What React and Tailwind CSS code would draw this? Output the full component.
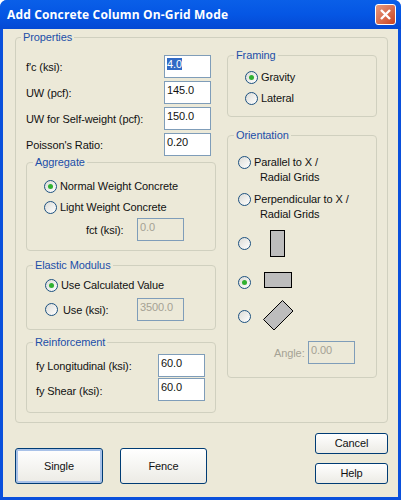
import React from 'react';

const Group = ({ title, className, titleClass, children }) => (
  <div className={`relative border border-[#d0d0bf] rounded-[4px] ${className}`}>
    <span className={`absolute -top-[9px] bg-[#ece9d8] px-[2px] text-[#1c4fa8] leading-[16px] ${titleClass || 'left-[6px]'}`}>{title}</span>
    {children}
  </div>
);

const Radio = ({ checked }) => (
  <span className="w-[13px] h-[13px] shrink-0 rounded-full border border-[#1c5180] bg-gradient-to-br from-[#dcdcd7] to-white flex items-center justify-center">
    {checked && <span className="w-[5px] h-[5px] rounded-full bg-[#31b131]" />}
  </span>
);

const Field = ({ value, disabled, selected, className }) => (
  <div className={`h-[23px] w-[47px] shrink-0 border border-[#7f9db9] pl-[2px] pt-[1px] leading-[15px] ${disabled ? 'bg-[#ece9d8] text-[#a5a294]' : 'bg-white'} ${className || ''}`}>
    {selected ? <span className="bg-[#316ac5] text-white">{value}</span> : value}
  </div>
);

const Button = ({ label, className }) => (
  <button className={`flex items-center justify-center rounded-[3px] border border-[#003c74] bg-gradient-to-b from-white to-[#ecebe5] ${className}`}>
    {label}
  </button>
);

const Row = ({ label, value }) => (
  <div className="flex items-center justify-between h-[26px] w-[185px]">
    <span className="pt-[3px]">{label}</span>
    <Field value={value} selected={value === '4.0'} />
  </div>
);

const RadioRow = ({ checked, label, className }) => (
  <div className={`flex items-center gap-[3px] h-[21px] ${className || ''}`}>
    <Radio checked={checked} />
    <span>{label}</span>
  </div>
);

export default function App() {
  return (
    <div className="w-[401px] h-[500px] flex flex-col bg-[#0a50dc] rounded-t-[7px] overflow-hidden text-[11px] tracking-[-0.1px] text-[#111]" style={{ fontFamily: '"Liberation Sans", Arial, sans-serif' }}>
      {/* Title bar */}
      <div className="h-[29px] shrink-0 flex items-center justify-between pl-[7px] pr-[5px] bg-gradient-to-b from-[#0a5fe8] via-[#0556e4] to-[#0449d4]">
        <span className="text-white font-bold text-[12px] tracking-[0.15px]" style={{ fontFamily: '"Open Sans", sans-serif' }}>Add Concrete Column On-Grid Mode</span>
        <div className="w-[21px] h-[21px] rounded-[3px] border border-white bg-gradient-to-br from-[#e79a7e] to-[#c9401c] flex items-center justify-center">
          <svg width="13" height="13" viewBox="0 0 13 13">
            <path d="M2 2 L11 11 M11 2 L2 11" stroke="#fff" strokeWidth="2.4" />
          </svg>
        </div>
      </div>

      {/* Dialog body */}
      <div className="flex-1 mx-[3px] mb-[3px] bg-[#ece9d8] pt-[8px] pl-[12px]">
        <Group title="Properties" className="w-[373px] h-[386px] flex pl-[10px]" titleClass="left-[5px]">
          <div className="w-[190px] pt-[15px]">
            <Row label="f'c (ksi):" value="4.0" />
            <Row label="UW (pcf):" value="145.0" />
            <Row label="UW for Self-weight (pcf):" value="150.0" />
            <Row label="Poisson's Ratio:" value="0.20" />

            <Group title="Aggregate" className="w-[190px] h-[89px] mt-[5px] pt-[13px] pl-[17px]">
              <RadioRow checked label="Normal Weight Concrete" />
              <RadioRow label="Light Weight Concrete" />
              <div className="flex items-center h-[23px] pl-[42px]">
                <span className="pt-[2px] w-[51px]">fct (ksi):</span>
                <Field value="0.0" disabled />
              </div>
            </Group>

            <Group title="Elastic Modulus" className="w-[190px] h-[65px] mt-[14px] pt-[9px] pl-[18px]">
              <RadioRow checked label="Use Calculated Value" />
              <div className="flex items-center h-[23px] mt-[2px]">
                <Radio />
                <span className="ml-[5px] w-[74px] pt-[2px]">Use (ksi):</span>
                <Field value="3500.0" disabled />
              </div>
            </Group>

            <Group title="Reinforcement" className="w-[190px] h-[71px] mt-[12px] pt-[9px] pl-[9px]">
              <div className="flex items-center justify-between w-[169px] h-[26px]">
                <span className="pt-[3px]">fy Longitudinal (ksi):</span>
                <Field value="60.0" />
              </div>
              <div className="flex items-center justify-between w-[169px] h-[23px]">
                <span className="pt-[3px]">fy Shear (ksi):</span>
                <Field value="60.0" />
              </div>
            </Group>
          </div>

          <div className="ml-[11px] w-[150px] pt-[17px]">
            <Group title="Framing" className="h-[62px] pt-[11px] pl-[17px]">
              <RadioRow checked label="Gravity" />
              <RadioRow label="Lateral" />
            </Group>

            <Group title="Orientation" className="h-[243px] mt-[18px] pl-[10px] pt-[16px]">
              <RadioRow label="Parallel to X /" />
              <div className="pl-[22px] leading-[14px] -mt-[3px]">Radial Grids</div>
              <RadioRow label="Perpendicular to X /" className="mt-[5px]" />
              <div className="pl-[22px] leading-[14px] -mt-[3px]">Radial Grids</div>

              <div className="flex items-center h-[28px] mt-[8px]">
                <Radio />
                <div className="ml-[19px] w-[15px] h-[27px] bg-[#bdbdbd] border border-black" />
              </div>
              <div className="flex items-center h-[28px] mt-[11px]">
                <Radio checked />
                <div className="ml-[13px] w-[28px] h-[16px] -mt-[4px] bg-[#bdbdbd] border border-black" />
              </div>
              <div className="flex items-center h-[30px] mt-[5px]">
                <Radio />
                <svg className="ml-[12px] -mt-[1px]" width="31" height="31" viewBox="0 0 31 31">
                  <polygon points="0.5,19.5 19.5,0.5 30,11 11,30" fill="#bdbdbd" stroke="#000" />
                </svg>
              </div>
              <div className="flex items-center h-[23px] mt-[10px] pl-[36px] text-[#a5a294]">
                <span className="pt-[2px] w-[34px]">Angle:</span>
                <Field value="0.00" disabled />
              </div>
            </Group>
          </div>
        </Group>

        {/* Bottom buttons */}
        <div className="flex w-[373px] mt-[10px]">
          <Button label="Single" className="w-[88px] h-[36px] mt-[15px] border-[#1c4f9c] shadow-[inset_0_0_0_2px_#a9c2e8]" />
          <Button label="Fence" className="w-[87px] h-[36px] mt-[15px] ml-[17px]" />
          <div className="ml-auto flex flex-col gap-[9px]">
            <Button label="Cancel" className="w-[73px] h-[21px]" />
            <Button label="Help" className="w-[73px] h-[21px]" />
          </div>
        </div>
      </div>
    </div>
  );
}
